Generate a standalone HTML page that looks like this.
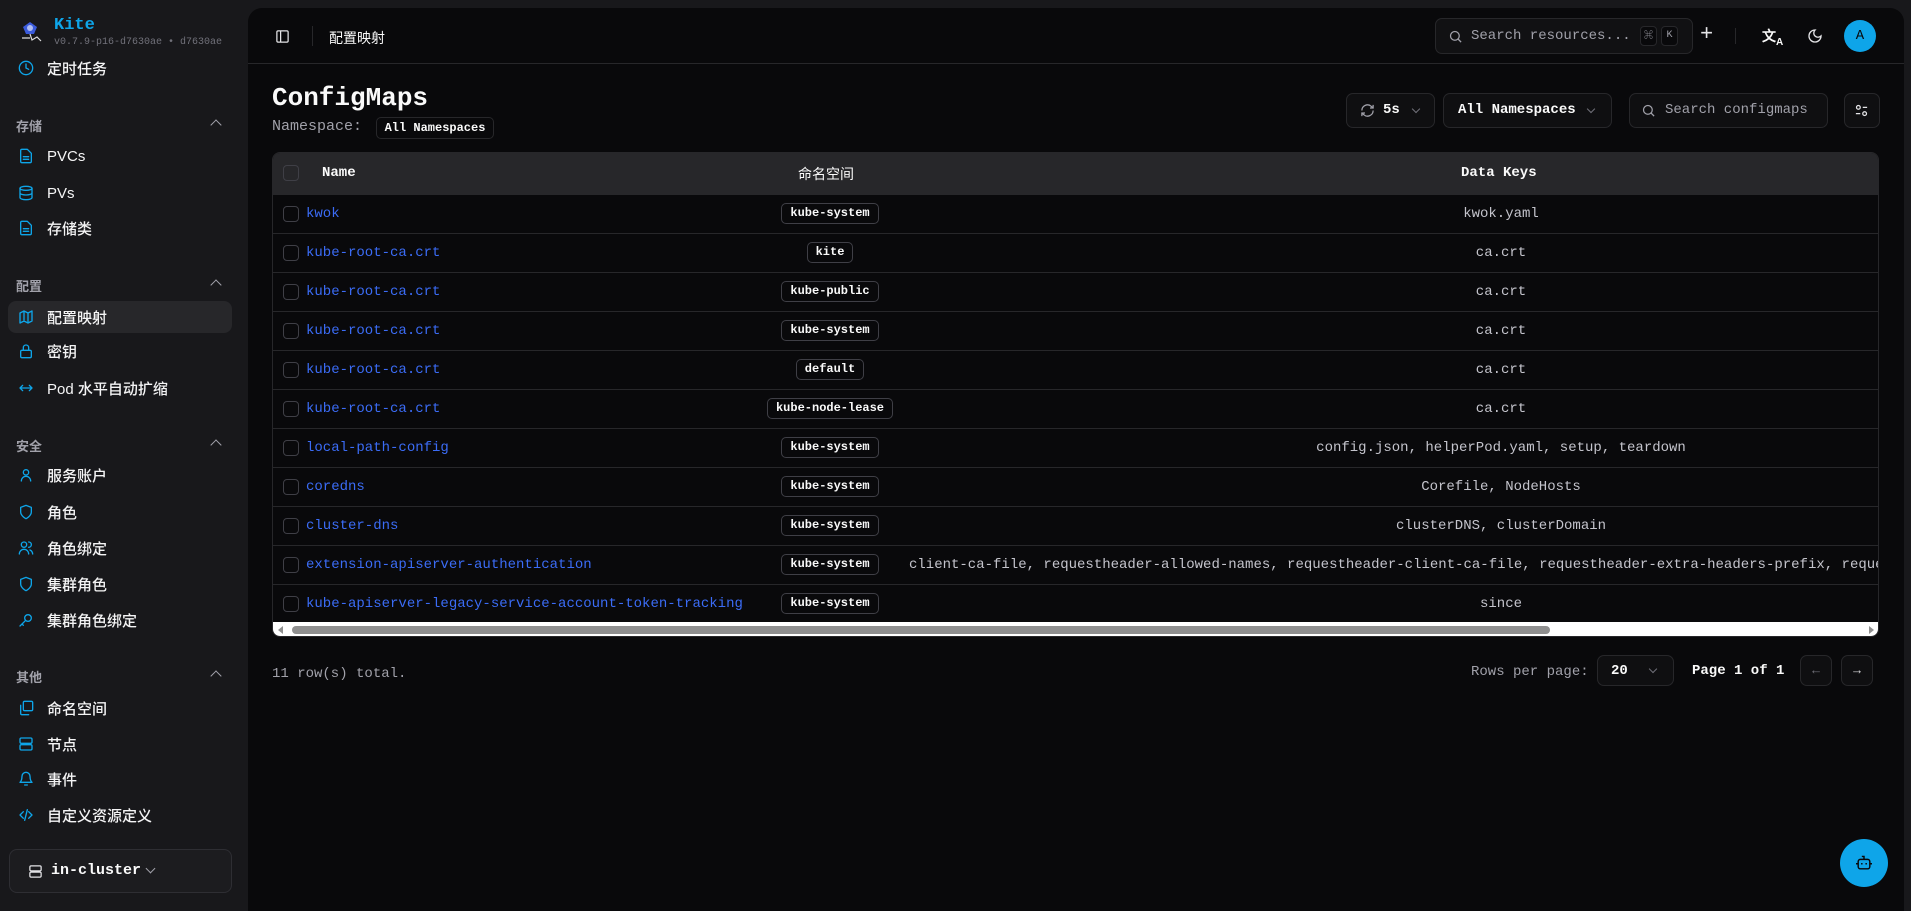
<!DOCTYPE html>
<html><head><meta charset="utf-8"><style>
*{box-sizing:border-box;margin:0;padding:0}
body{width:1911px;height:911px;background:#18181b;font-family:"Liberation Mono","Noto Sans CJK SC",monospace;color:#fafafa;position:relative;overflow:hidden}
.a{position:absolute}
.side-item{position:absolute;left:8px;width:224px;height:32px;display:flex;align-items:center;padding-left:10px;font-size:15px;color:#f4f4f5;font-family:"Liberation Sans","Noto Sans CJK SC",sans-serif;font-weight:500}
.side-item svg{width:16px;height:16px;margin-right:13px;stroke:#0ea5e9;fill:none;stroke-width:2;stroke-linecap:round;stroke-linejoin:round}
.sec{position:absolute;left:16px;width:210px;font-size:13px;color:#a1a1aa;font-family:"Liberation Sans","Noto Sans CJK SC",sans-serif;font-weight:600}
.sec:after{content:"";position:absolute;right:6px;top:5px;width:7px;height:7px;border-left:1.5px solid #a1a1aa;border-top:1.5px solid #a1a1aa;transform:rotate(45deg)}
.main{position:absolute;left:248px;top:8px;width:1656px;height:903px;background:#09090b;border-radius:14px 14px 0 0}
.btn{position:absolute;border:1px solid #27272a;border-radius:7px;background:#0f0f11}
.tbl{position:absolute;left:272px;top:152px;width:1607px;height:485px;border:1px solid #27272a;border-radius:8px;overflow:hidden}
.row{position:absolute;left:0;width:1607px;height:39px;border-top:1px solid #27272a;font-size:14px}
.cb{position:absolute;left:10px;width:16px;height:16px;border:1px solid #3f3f46;border-radius:4px}
.nm{position:absolute;left:33px;color:#3b6cf6;line-height:39px}
.ns{position:absolute;left:557px;width:0;top:8px;display:flex;justify-content:center}
.ns span{white-space:nowrap;border:1px solid #3f3f46;border-radius:5px;padding:1px 8px;font-size:12px;font-weight:bold;background:#09090b;line-height:17px}
.dk{position:absolute;left:1228px;width:0;display:flex;justify-content:center;line-height:39px;color:#c4c4cc}
.dk span{white-space:nowrap}
</style></head><body>
<svg class="a" style="left:18px;top:20px" width="26" height="26" viewBox="0 0 26 26"><path d="M12 2l7 5-3 7h-8l-3-7z" fill="#3b5bdb"/><circle cx="12" cy="8" r="3" fill="#fff" opacity=".6"/><path d="M4 18h8M12 14l2 6 5-3 4 4" stroke="#ddd" fill="none" stroke-width="1.2"/></svg>
<div class="a" style="left:54px;top:16px;font-size:17px;font-weight:bold;color:#0ea5e9">Kite</div>
<div class="a" style="left:54px;top:37px;font-size:10px;color:#71717a">v0.7.9-p16-d7630ae • d7630ae</div>
<div class="side-item" style="top:52px"><svg viewBox="0 0 24 24"><circle cx="12" cy="12" r="10"/><path d="M12 6v6l4 2"/></svg>定时任务</div>
<div class="sec" style="top:116px">存储</div>
<div class="side-item" style="top:140px"><svg viewBox="0 0 24 24"><path d="M14 2H6a2 2 0 0 0-2 2v16a2 2 0 0 0 2 2h12a2 2 0 0 0 2-2V8z"/><path d="M8 13h8M8 17h8"/></svg>PVCs</div>
<div class="side-item" style="top:177px"><svg viewBox="0 0 24 24"><ellipse cx="12" cy="5" rx="9" ry="3"/><path d="M3 5v14c0 1.7 4 3 9 3s9-1.3 9-3V5M3 12c0 1.7 4 3 9 3s9-1.3 9-3"/></svg>PVs</div>
<div class="side-item" style="top:212px"><svg viewBox="0 0 24 24"><path d="M14 2H6a2 2 0 0 0-2 2v16a2 2 0 0 0 2 2h12a2 2 0 0 0 2-2V8z"/><path d="M8 13h8M8 17h8"/></svg>存储类</div>
<div class="sec" style="top:276px">配置</div>
<div class="side-item" style="top:301px;background:#27272a;border-radius:8px"><svg viewBox="0 0 24 24"><path d="M3 6l6-3 6 3 6-3v15l-6 3-6-3-6 3zM9 3v15M15 6v15"/></svg>配置映射</div>
<div class="side-item" style="top:335px"><svg viewBox="0 0 24 24"><rect x="4" y="11" width="16" height="11" rx="2"/><path d="M8 11V7a4 4 0 0 1 8 0v4"/></svg>密钥</div>
<div class="side-item" style="top:372px"><svg viewBox="0 0 24 24"><path d="M3 12h18M7 8l-4 4 4 4M17 8l4 4-4 4"/></svg>Pod 水平自动扩缩</div>
<div class="sec" style="top:436px">安全</div>
<div class="side-item" style="top:459px"><svg viewBox="0 0 24 24"><circle cx="12" cy="8" r="4"/><path d="M5 21a7 7 0 0 1 14 0"/></svg>服务账户</div>
<div class="side-item" style="top:496px"><svg viewBox="0 0 24 24"><path d="M12 22s8-4 8-10V5l-8-3-8 3v7c0 6 8 10 8 10z"/></svg>角色</div>
<div class="side-item" style="top:532px"><svg viewBox="0 0 24 24"><circle cx="9" cy="7" r="4"/><path d="M2 21a7 7 0 0 1 14 0M16 3a4 4 0 0 1 0 8M22 21a7 7 0 0 0-4-6"/></svg>角色绑定</div>
<div class="side-item" style="top:568px"><svg viewBox="0 0 24 24"><path d="M12 22s8-4 8-10V5l-8-3-8 3v7c0 6 8 10 8 10z"/></svg>集群角色</div>
<div class="side-item" style="top:604px"><svg viewBox="0 0 24 24"><circle cx="15" cy="9" r="5"/><path d="M11 13l-8 8M6 18l2 2"/></svg>集群角色绑定</div>
<div class="sec" style="top:667px">其他</div>
<div class="side-item" style="top:692px"><svg viewBox="0 0 24 24"><rect x="8" y="2" width="14" height="14" rx="2"/><path d="M4 8v12a2 2 0 0 0 2 2h10"/></svg>命名空间</div>
<div class="side-item" style="top:728px"><svg viewBox="0 0 24 24"><rect x="3" y="3" width="18" height="8" rx="2"/><rect x="3" y="13" width="18" height="8" rx="2"/></svg>节点</div>
<div class="side-item" style="top:763px"><svg viewBox="0 0 24 24"><path d="M6 8a6 6 0 0 1 12 0c0 7 3 9 3 9H3s3-2 3-9M10 21h4"/></svg>事件</div>
<div class="side-item" style="top:799px"><svg viewBox="0 0 24 24"><path d="M8 7l-5 5 5 5M16 7l5 5-5 5M14 4l-4 16"/></svg>自定义资源定义</div>
<div class="a" style="left:9px;top:849px;width:223px;height:44px;border:1px solid #2e2e33;border-radius:8px;background:#1c1c1f"></div>
<svg class="a" style="left:28px;top:864px" width="15" height="15" viewBox="0 0 24 24" fill="none" stroke="#e4e4e7" stroke-width="2"><rect x="3" y="3" width="18" height="8" rx="2"/><rect x="3" y="13" width="18" height="8" rx="2"/></svg>
<div class="a" style="left:51px;top:862px;font-size:15px;font-weight:bold">in-cluster</div>
<div class="a" style="left:147px;top:865px;width:7px;height:7px;border-right:1.5px solid #a1a1aa;border-bottom:1.5px solid #a1a1aa;transform:rotate(45deg)"></div>

<div class="main">
  <div class="a" style="left:0;top:55px;width:1656px;height:1px;background:#27272a"></div>
  <svg class="a" style="left:27px;top:21px" width="15" height="15" viewBox="0 0 24 24" fill="none" stroke="#e4e4e7" stroke-width="2"><rect x="3" y="3" width="18" height="18" rx="2"/><path d="M9 3v18"/></svg>
  <div class="a" style="left:64px;top:18px;width:1px;height:20px;background:#27272a"></div>
  <div class="a" style="left:81px;top:20px;font-size:14px;font-family:'Liberation Sans','Noto Sans CJK SC',sans-serif">配置映射</div>
  <div class="btn" style="left:1187px;top:10px;width:258px;height:36px;background:#111113"></div>
  <svg class="a" style="left:1200px;top:21px" width="15" height="15" viewBox="0 0 24 24" fill="none" stroke="#a1a1aa" stroke-width="2"><circle cx="11" cy="11" r="7"/><path d="M21 21l-5-5"/></svg>
  <div class="a" style="left:1223px;top:20px;font-size:14px;color:#a1a1aa">Search resources...</div>
  <div class="a" style="left:1392px;top:18px;width:17px;height:20px;border:1px solid #27272a;border-radius:4px;background:#09090b;font-size:9px;color:#a1a1aa;text-align:center;line-height:18px">⌘</div>
  <div class="a" style="left:1413px;top:18px;width:17px;height:20px;border:1px solid #27272a;border-radius:4px;background:#09090b;font-size:10px;color:#a1a1aa;text-align:center;line-height:18px">K</div>
  <div class="a" style="left:1452px;top:14px;font-size:22px;color:#e4e4e7">+</div>
  <div class="a" style="left:1487px;top:20px;width:1px;height:16px;background:#27272a"></div>
  <div class="a" style="left:1514px;top:18px;font-size:14px;font-weight:bold;font-family:'Liberation Sans',sans-serif">文<sub style="font-size:10px">A</sub></div>
  <svg class="a" style="left:1559px;top:20px" width="16" height="16" viewBox="0 0 24 24" fill="none" stroke="#e4e4e7" stroke-width="2"><path d="M12 3a6 6 0 0 0 9 9 9 9 0 1 1-9-9z"/></svg>
  <div class="a" style="left:1596px;top:12px;width:32px;height:32px;border-radius:50%;background:#0ea5e9;color:#09090b;font-size:14px;text-align:center;line-height:32px">A</div>

  <div class="a" style="left:24px;top:75px;font-size:26px;font-weight:bold">ConfigMaps</div>
  <div class="a" style="left:24px;top:110px;font-size:15px;color:#a1a1aa">Namespace:</div>
  <div class="a" style="left:128px;top:109px;width:118px;height:22px;border:1px solid #27272a;border-radius:5px;font-size:12px;font-weight:bold;text-align:center;line-height:20px">All Namespaces</div>

  <div class="btn" style="left:1098px;top:85px;width:89px;height:35px"></div>
  <svg class="a" style="left:1112px;top:95px" width="15" height="15" viewBox="0 0 24 24" fill="none" stroke="#a1a1aa" stroke-width="2"><path d="M21 12a9 9 0 0 1-15 6.7L3 16M3 12a9 9 0 0 1 15-6.7L21 8M21 3v5h-5M3 21v-5h5"/></svg>
  <div class="a" style="left:1135px;top:94px;font-size:14px;font-weight:bold">5s</div>
  <div class="a" style="left:1165px;top:98px;width:6px;height:6px;border-right:1.3px solid #71717a;border-bottom:1.3px solid #71717a;transform:rotate(45deg)"></div>
  <div class="btn" style="left:1195px;top:85px;width:169px;height:35px"></div>
  <div class="a" style="left:1210px;top:94px;font-size:14px;font-weight:bold">All Namespaces</div>
  <div class="a" style="left:1340px;top:98px;width:6px;height:6px;border-right:1.3px solid #71717a;border-bottom:1.3px solid #71717a;transform:rotate(45deg)"></div>
  <div class="btn" style="left:1381px;top:85px;width:199px;height:35px"></div>
  <svg class="a" style="left:1393px;top:95px" width="15" height="15" viewBox="0 0 24 24" fill="none" stroke="#a1a1aa" stroke-width="2"><circle cx="11" cy="11" r="7"/><path d="M21 21l-5-5"/></svg>
  <div class="a" style="left:1417px;top:94px;font-size:14px;color:#a1a1aa">Search configmaps</div>
  <div class="btn" style="left:1596px;top:85px;width:36px;height:35px"></div>
  <svg class="a" style="left:1606px;top:95px" width="15" height="15" viewBox="0 0 24 24" fill="none" stroke="#e4e4e7" stroke-width="2"><path d="M14 7h7M3 17h7"/><circle cx="7" cy="7" r="3"/><circle cx="17" cy="17" r="3"/></svg>

  <div class="a" style="left:24px;top:658px;font-size:14px;color:#a1a1aa">11 row(s) total.</div>
  <div class="a" style="left:1223px;top:656px;font-size:14px;color:#a1a1aa">Rows per page:</div>
  <div class="btn" style="left:1349px;top:647px;width:77px;height:31px"></div>
  <div class="a" style="left:1363px;top:655px;font-size:14px;font-weight:bold">20</div>
  <div class="a" style="left:1402px;top:658px;width:6px;height:6px;border-right:1.3px solid #71717a;border-bottom:1.3px solid #71717a;transform:rotate(45deg)"></div>
  <div class="a" style="left:1444px;top:655px;font-size:14px;font-weight:bold">Page 1 of 1</div>
  <div class="btn" style="left:1552px;top:647px;width:32px;height:31px;color:#71717a;font-size:13px;text-align:center;line-height:29px">←</div>
  <div class="btn" style="left:1593px;top:647px;width:32px;height:31px;color:#d4d4d8;font-size:13px;text-align:center;line-height:29px">→</div>

  <div class="a" style="left:1592px;top:831px;width:48px;height:48px;border-radius:50%;background:#0ea5e9"></div>
  <svg class="a" style="left:1607px;top:847px" width="18" height="16" viewBox="0 0 24 22" fill="none" stroke="#09090b" stroke-width="2"><rect x="4" y="6" width="16" height="13" rx="3"/><path d="M12 6V2h-3M1 12h3M20 12h3M9 11v2M15 11v2"/></svg>
</div>

<div class="tbl">
  <div class="a" style="left:0;top:0;width:1607px;height:41px;background:#27272a"></div>
  <div class="cb" style="top:12px;left:10px"></div>
  <div class="a" style="left:49px;top:12px;font-size:14px;font-weight:bold">Name</div>
  <div class="a" style="left:525px;top:11px;font-size:14px;font-family:'Liberation Sans','Noto Sans CJK SC',sans-serif">命名空间</div>
  <div class="a" style="left:1188px;top:12px;font-size:14px;font-weight:bold">Data Keys</div>

  <div class="row" style="top:41px"><div class="cb" style="top:11px"></div><div class="nm">kwok</div><div class="ns"><span>kube-system</span></div><div class="dk"><span>kwok.yaml</span></div></div>
  <div class="row" style="top:80px"><div class="cb" style="top:11px"></div><div class="nm">kube-root-ca.crt</div><div class="ns"><span>kite</span></div><div class="dk"><span>ca.crt</span></div></div>
  <div class="row" style="top:119px"><div class="cb" style="top:11px"></div><div class="nm">kube-root-ca.crt</div><div class="ns"><span>kube-public</span></div><div class="dk"><span>ca.crt</span></div></div>
  <div class="row" style="top:158px"><div class="cb" style="top:11px"></div><div class="nm">kube-root-ca.crt</div><div class="ns"><span>kube-system</span></div><div class="dk"><span>ca.crt</span></div></div>
  <div class="row" style="top:197px"><div class="cb" style="top:11px"></div><div class="nm">kube-root-ca.crt</div><div class="ns"><span>default</span></div><div class="dk"><span>ca.crt</span></div></div>
  <div class="row" style="top:236px"><div class="cb" style="top:11px"></div><div class="nm">kube-root-ca.crt</div><div class="ns"><span>kube-node-lease</span></div><div class="dk"><span>ca.crt</span></div></div>
  <div class="row" style="top:275px"><div class="cb" style="top:11px"></div><div class="nm">local-path-config</div><div class="ns"><span>kube-system</span></div><div class="dk"><span>config.json, helperPod.yaml, setup, teardown</span></div></div>
  <div class="row" style="top:314px"><div class="cb" style="top:11px"></div><div class="nm">coredns</div><div class="ns"><span>kube-system</span></div><div class="dk"><span>Corefile, NodeHosts</span></div></div>
  <div class="row" style="top:353px"><div class="cb" style="top:11px"></div><div class="nm">cluster-dns</div><div class="ns"><span>kube-system</span></div><div class="dk"><span>clusterDNS, clusterDomain</span></div></div>
  <div class="row" style="top:392px"><div class="cb" style="top:11px"></div><div class="nm">extension-apiserver-authentication</div><div class="ns"><span>kube-system</span></div><div class="a" style="left:636px;line-height:39px;color:#c4c4cc;white-space:nowrap">client-ca-file, requestheader-allowed-names, requestheader-client-ca-file, requestheader-extra-headers-prefix, requestheader-group-headers</div></div>
  <div class="row" style="top:431px"><div class="cb" style="top:11px"></div><div class="nm">kube-apiserver-legacy-service-account-token-tracking</div><div class="ns"><span>kube-system</span></div><div class="dk"><span>since</span></div></div>
  <div class="a" style="left:0;top:469px;width:1607px;height:16px;background:#fff"></div>
  <div class="a" style="left:19px;top:473px;width:1258px;height:8px;border-radius:4px;background:#8f8f8f"></div>
  <div class="a" style="left:5px;top:473px;width:0;height:0;border-right:5px solid #8f8f8f;border-top:4px solid transparent;border-bottom:4px solid transparent"></div>
  <div class="a" style="left:1596px;top:473px;width:0;height:0;border-left:5px solid #8f8f8f;border-top:4px solid transparent;border-bottom:4px solid transparent"></div>
</div>
</body></html>
